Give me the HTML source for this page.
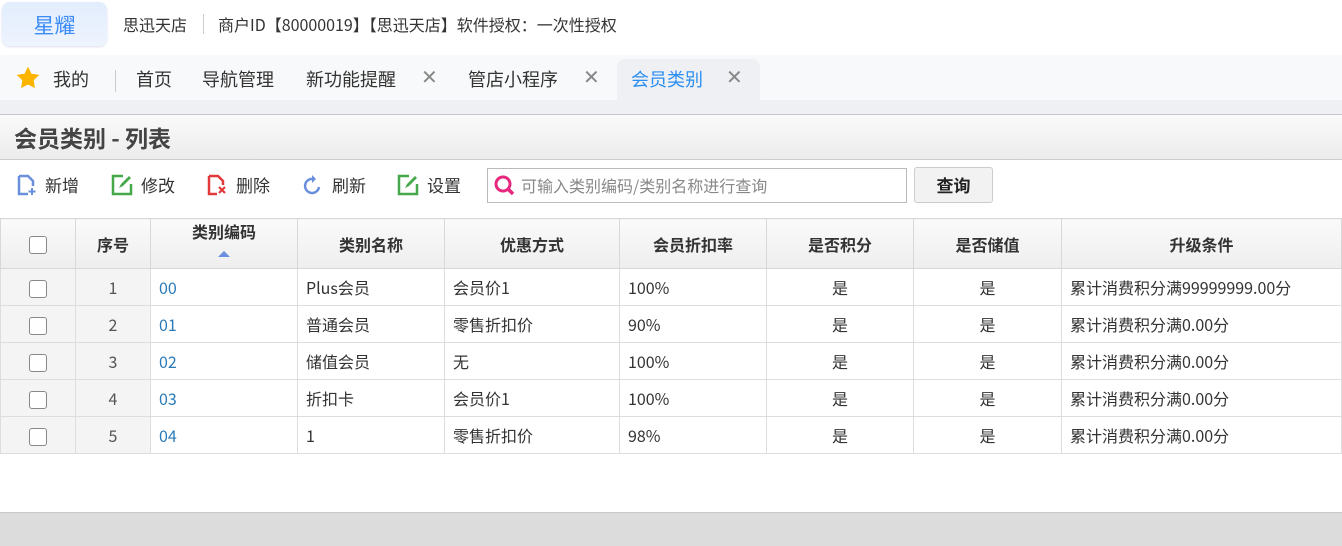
<!DOCTYPE html><html><head><meta charset="utf-8"><style>
*{margin:0;padding:0;box-sizing:border-box}
body{width:1342px;height:546px;overflow:hidden;background:#fff;font-family:"Noto Sans CJK SC","Liberation Sans",sans-serif;color:#333;position:relative}
.abs{position:absolute}
.logo{left:2px;top:2px;width:105px;height:44px;border-radius:8px;background:linear-gradient(#e2edfd,#eef4fe);box-shadow:0 1px 2px #dde;color:#3b8cf5;font-size:21px;text-align:center;line-height:46px}
.hdr{top:12px;font-size:16px;color:#333;line-height:24px}
.tabs{top:55px;left:0;width:1342px;height:45px;background:#f8f9fa}
.tab{position:absolute;top:11px;font-size:18px;color:#333;line-height:26px}
.x{color:#888;font-size:20px;position:absolute;top:10px;line-height:26px;font-family:"Liberation Sans",sans-serif}
.band{top:100px;left:0;width:1342px;height:15px;background:#eef0f4;border-bottom:1px solid #c8c8c8}
.title{top:115px;left:0;width:1342px;height:45px;background:linear-gradient(#fafafa,#ececec);border-bottom:1px solid #ccc;font-size:23px;font-weight:bold;color:#444;padding:0 14px;line-height:45px}
.tb{top:173px;font-size:17px;color:#333;line-height:24px}
table{position:absolute;top:218px;left:0;width:1342px;border-collapse:collapse;font-size:16px}
td,th{border:1px solid #ddd;height:37px;padding:0 8px;line-height:20px;vertical-align:middle}
th{height:50px;background:linear-gradient(#fafafa,#eeeeee);font-weight:bold;font-size:16px;color:#333;border-color:#d8d8d8}
tr td:nth-child(-n+2){background:#f4f4f4;text-align:center;color:#555}
.cb{display:inline-block;width:18px;height:18px;border:1.5px solid #888;border-radius:3px;background:#fff;vertical-align:middle}
.blue{color:#2a7ab8}
.c{text-align:center}
</style></head><body>
<div class="abs logo">星耀</div>
<div class="abs hdr" style="left:123px">思迅天店</div>
<div class="abs" style="left:203px;top:14px;width:1px;height:20px;background:#ccc"></div>
<div class="abs hdr" style="left:218px">商户ID【80000019】【思迅天店】软件授权：一次性授权</div>
<div class="abs tabs">
<svg class="abs" style="left:14px;top:10px" width="28" height="26" viewBox="0 0 24 24"><path d="M12 1.5l3.2 6.6 7.2 1-5.2 5.1 1.2 7.2L12 18l-6.4 3.4 1.2-7.2L1.6 9.1l7.2-1z" fill="#fdb400"/></svg>
<span class="tab" style="left:53px">我的</span>
<div class="abs" style="left:115px;top:15px;width:1px;height:22px;background:#ccc"></div>
<span class="tab" style="left:136px">首页</span>
<span class="tab" style="left:202px">导航管理</span>
<span class="tab" style="left:306px">新功能提醒</span><span class="x" style="left:421px">✕</span>
<span class="tab" style="left:468px">管店小程序</span><span class="x" style="left:583px">✕</span>
<div class="abs" style="left:617px;top:4px;width:143px;height:41px;background:#eef0f4;border-radius:8px 8px 0 0"></div>
<span class="tab" style="left:631px;color:#2a8ef0">会员类别</span><span class="x" style="left:726px">✕</span>
</div>
<div class="abs band"></div>
<div class="abs title">会员类别 - 列表</div>
<svg class="abs" style="left:16px;top:174px" width="22" height="22" viewBox="0 0 22 22"><path d="M3 2h9l5 5v5M3 2v18h9" fill="none" stroke="#6a8fdc" stroke-width="2.5"/><path d="M16 14v7M12.5 17.5h7" stroke="#6a8fdc" stroke-width="2"/></svg>
<span class="abs tb" style="left:45px">新增</span>
<svg class="abs" style="left:111px;top:174px" width="22" height="22" viewBox="0 0 22 22"><path d="M12 2H2v18h18V10" fill="none" stroke="#45a84a" stroke-width="2.5"/><path d="M8 14l2-4 8-8 2 2-8 8z" fill="#45a84a"/></svg>
<span class="abs tb" style="left:141px">修改</span>
<svg class="abs" style="left:206px;top:174px" width="22" height="22" viewBox="0 0 22 22"><path d="M3 2h9l5 5v4M3 2v18h8" fill="none" stroke="#e23a3a" stroke-width="2.5"/><path d="M13 13l6 6M19 13l-6 6" stroke="#e23a3a" stroke-width="2.2"/></svg>
<span class="abs tb" style="left:236px">删除</span>
<svg class="abs" style="left:302px;top:174px" width="22" height="22" viewBox="0 0 22 22"><path d="M17 13a7 7 0 1 1-6-8" fill="none" stroke="#6a8fdc" stroke-width="2.5"/><path d="M10 1l4 4-4 4z" fill="#6a8fdc"/></svg>
<span class="abs tb" style="left:332px">刷新</span>
<svg class="abs" style="left:397px;top:174px" width="22" height="22" viewBox="0 0 22 22"><path d="M12 2H2v18h18V10" fill="none" stroke="#45a84a" stroke-width="2.5"/><path d="M8 14l2-4 8-8 2 2-8 8z" fill="#45a84a"/></svg>
<span class="abs tb" style="left:427px">设置</span>
<div class="abs" style="left:487px;top:168px;width:420px;height:35px;border:1px solid #bbb;background:#fff"></div>
<svg class="abs" style="left:493px;top:174px" width="24" height="24" viewBox="0 0 24 24"><circle cx="10" cy="10" r="7" fill="none" stroke="#e6287f" stroke-width="3"/><path d="M15 15l5 5" stroke="#e6287f" stroke-width="3.5"/></svg>
<span class="abs" style="left:521px;top:173px;font-size:16px;color:#888;line-height:24px">可输入类别编码/类别名称进行查询</span>
<div class="abs" style="left:914px;top:167px;width:79px;height:36px;border:1px solid #ccc;border-radius:3px;background:#f2f2f2;text-align:center;line-height:34px;font-weight:bold;font-size:17px;color:#222">查询</div>
<table>
<colgroup><col style="width:75px"><col style="width:75px"><col style="width:147px"><col style="width:147px"><col style="width:175px"><col style="width:147px"><col style="width:147px"><col style="width:148px"><col></colgroup>
<tr><th><span class="cb"></span></th><th>序号</th><th style="vertical-align:top;padding-top:2px">类别编码<br><svg width="14" height="8" viewBox="0 0 14 8"><path d="M1 7L7 1l6 6z" fill="#6a8fdc"/></svg></th><th>类别名称</th><th>优惠方式</th><th>会员折扣率</th><th>是否积分</th><th>是否储值</th><th>升级条件</th></tr>
<tr><td><span class="cb"></span></td><td>1</td><td class="blue">00</td><td>Plus会员</td><td>会员价1</td><td>100%</td><td class="c">是</td><td class="c">是</td><td>累计消费积分满99999999.00分</td></tr>
<tr><td><span class="cb"></span></td><td>2</td><td class="blue">01</td><td>普通会员</td><td>零售折扣价</td><td>90%</td><td class="c">是</td><td class="c">是</td><td>累计消费积分满0.00分</td></tr>
<tr><td><span class="cb"></span></td><td>3</td><td class="blue">02</td><td>储值会员</td><td>无</td><td>100%</td><td class="c">是</td><td class="c">是</td><td>累计消费积分满0.00分</td></tr>
<tr><td><span class="cb"></span></td><td>4</td><td class="blue">03</td><td>折扣卡</td><td>会员价1</td><td>100%</td><td class="c">是</td><td class="c">是</td><td>累计消费积分满0.00分</td></tr>
<tr><td><span class="cb"></span></td><td>5</td><td class="blue">04</td><td>1</td><td>零售折扣价</td><td>98%</td><td class="c">是</td><td class="c">是</td><td>累计消费积分满0.00分</td></tr>
</table>
<div class="abs" style="left:0;top:512px;width:1342px;height:34px;background:#dcdcdc;border-top:1px solid #c8c8c8"></div>
</body></html>
